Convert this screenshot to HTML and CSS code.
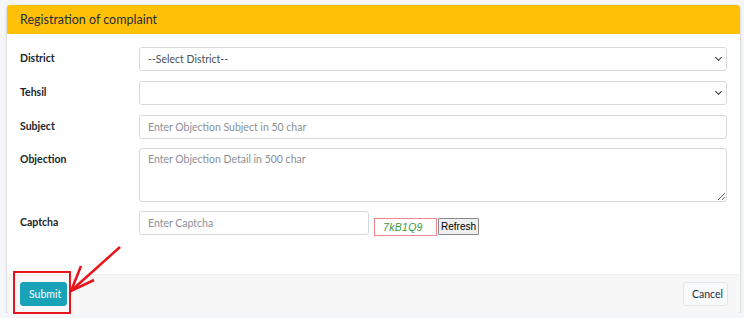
FILE: index.html
```html
<!DOCTYPE HTML>
<html>
	<head>
		<meta charset="utf-8"/>
		<link rel="stylesheet" href="styles.css">
	</head>
	<body>
		<div class="card">
			<div class="card-header">Registration of complaint</div>
			<div class="card-body">
				<label class="lbl">District</label>
				<div class="sel">
					<select class="ctl"><option>--Select District--</option></select>
					<span class="chev"></span>
				</div>

				<label class="lbl">Tehsil</label>
				<div class="sel">
					<select class="ctl"><option></option></select>
					<span class="chev"></span>
				</div>

				<label class="lbl">Subject</label>
				<input class="ctl" type="text" placeholder="Enter Objection Subject in 50 char">

				<label class="lbl lbl-up">Objection</label>
				<textarea class="ctl area" placeholder="Enter Objection Detail in 500 char"></textarea>

				<label class="lbl lbl-up2">Captcha</label>
				<div class="cap-row">
					<input class="ctl cap-input" type="text" placeholder="Enter Captcha">
					<span class="cap-img">7kB1Q9</span>
					<button class="refresh" type="button">Refresh</button>
				</div>
			</div>
			<div class="card-footer">
				<button class="btn btn-info" type="button">Submit</button>
				<button class="btn btn-light" type="button">Cancel</button>
			</div>
		</div>

		<!-- markup drawn over the screenshot -->
		<div class="mark-box"></div>
		<svg class="mark-arrow" width="60" height="60" viewBox="0 0 60 60">
			<path d="M57 1 L9 44" stroke="#e8141c" stroke-width="2.5" fill="none"/>
			<path d="M18 20 L8 45 L31 34" stroke="#e8141c" stroke-width="2.5" fill="none" stroke-linejoin="miter"/>
		</svg>
	</body>
</html>
```

FILE: styles.css
```css
body{margin:0;background:#f4f6f9;font-family:'Lato','Liberation Sans',sans-serif;color:#212529;padding:5px 4px 0 7px;}

.card{width:733px;background:#fff;border-radius:3px;box-shadow:0 0 1px rgba(0,0,0,.125),0 1px 3px rgba(0,0,0,.2);overflow:hidden;}
.card-header{background:#ffc107;height:29px;line-height:29px;padding:0 13px;font-size:12.5px;color:#1f2d3d;}

.card-body{display:grid;grid-template-columns:119px 1fr;row-gap:10px;padding:13px 13px 38px 13px;}
.lbl{font-weight:bold;font-size:10.5px;line-height:24px;margin-top:-1px;}

.ctl{box-sizing:border-box;width:100%;height:24px;border:1px solid #d6dadf;border-radius:3px;background:#fff;padding:0 8px;font-family:inherit;font-size:10.5px;color:#495057;outline:none;margin:0;display:block;}
.ctl::placeholder{color:#8a9096;}
.area{height:54px;padding-top:4px;resize:vertical;margin-top:-1px;}
.lbl-up{margin-top:-2px;}
.lbl-up2{margin-top:-2px;}

.sel{position:relative;}
.sel select{appearance:none;-webkit-appearance:none;}
.chev{position:absolute;right:6px;top:8px;width:4px;height:4px;border-right:1.5px solid #343a40;border-bottom:1.5px solid #343a40;transform:rotate(45deg);pointer-events:none;}

.cap-row{display:flex;align-items:flex-start;margin-top:-1px;}
.cap-input{width:230px;}
.cap-img{box-sizing:border-box;width:63px;height:18px;margin:7px 0 0 5px;border:1px solid #f3868c;background:#fff;color:#3a9a3a;font-style:italic;font-family:'Liberation Sans',sans-serif;font-size:10.5px;line-height:16px;padding-left:8px;letter-spacing:0.3px;}
.refresh{box-sizing:border-box;height:17px;margin:7px 0 0 1px;padding:0 2px;border:1px solid #8a8a8a;border-radius:1px;background:#efefef;font-family:'Liberation Sans',sans-serif;font-size:10px;color:#000;}

.card-footer{display:flex;justify-content:space-between;align-items:center;background:#f7f7f7;height:39px;padding:0 12px 0 13px;border-top:1px solid #f0f0f0;box-sizing:border-box;}
.btn{height:24px;border-radius:3px;font-family:inherit;font-size:10.5px;padding:0 8px;}
.btn-info{background:#17a2b8;border:1px solid #17a2b8;color:#fff;width:47px;}
.btn-light{background:#f8f9fa;border:1px solid #e2e5e8;color:#1f2d3d;width:45px;}

.mark-box{position:absolute;left:13px;top:271px;width:54px;height:39px;border:2px solid #e8141c;}
.mark-arrow{position:absolute;left:63px;top:246px;}
```
